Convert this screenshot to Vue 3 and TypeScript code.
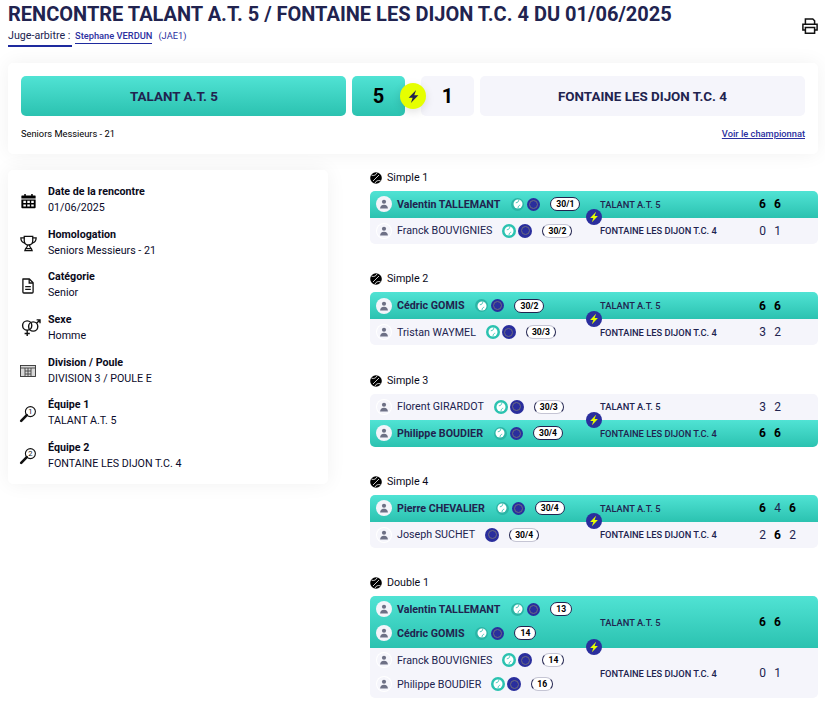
<script setup lang="ts">
interface Player { name: string; rank: string; noBall?: boolean }
interface Side { team: string; won: boolean; players: Player[]; scores: number[] }
interface Match { label: string; sides: Side[] }

const A = 'TALANT A.T. 5'
const B = 'FONTAINE LES DIJON T.C. 4'

const matches: Match[] = [
  { label: 'Simple 1', sides: [
    { team: A, won: true, players: [{ name: 'Valentin TALLEMANT', rank: '30/1' }], scores: [6, 6] },
    { team: B, won: false, players: [{ name: 'Franck BOUVIGNIES', rank: '30/2' }], scores: [0, 1] },
  ] },
  { label: 'Simple 2', sides: [
    { team: A, won: true, players: [{ name: 'Cédric GOMIS', rank: '30/2' }], scores: [6, 6] },
    { team: B, won: false, players: [{ name: 'Tristan WAYMEL', rank: '30/3' }], scores: [3, 2] },
  ] },
  { label: 'Simple 3', sides: [
    { team: A, won: false, players: [{ name: 'Florent GIRARDOT', rank: '30/3' }], scores: [3, 2] },
    { team: B, won: true, players: [{ name: 'Philippe BOUDIER', rank: '30/4' }], scores: [6, 6] },
  ] },
  { label: 'Simple 4', sides: [
    { team: A, won: true, players: [{ name: 'Pierre CHEVALIER', rank: '30/4' }], scores: [6, 4, 6] },
    { team: B, won: false, players: [{ name: 'Joseph SUCHET', rank: '30/4', noBall: true }], scores: [2, 6, 2] },
  ] },
  { label: 'Double 1', sides: [
    { team: A, won: true, players: [{ name: 'Valentin TALLEMANT', rank: '13' }, { name: 'Cédric GOMIS', rank: '14' }], scores: [6, 6] },
    { team: B, won: false, players: [{ name: 'Franck BOUVIGNIES', rank: '14' }, { name: 'Philippe BOUDIER', rank: '16' }], scores: [0, 1] },
  ] },
]

const infos = [
  { icon: 'cal', title: 'Date de la rencontre', value: '01/06/2025' },
  { icon: 'trophy', title: 'Homologation', value: 'Seniors Messieurs - 21' },
  { icon: 'file', title: 'Catégorie', value: 'Senior' },
  { icon: 'sex', title: 'Sexe', value: 'Homme' },
  { icon: 'grid', title: 'Division / Poule', value: 'DIVISION 3 / POULE E' },
  { icon: 'r1', title: 'Équipe 1', value: 'TALANT A.T. 5' },
  { icon: 'r2', title: 'Équipe 2', value: 'FONTAINE LES DIJON T.C. 4' },
]

function isBold(m: Match, s: Side, i: number): boolean {
  const other = m.sides.find((o) => o !== s)
  return !!other && s.scores[i] > other.scores[i]
}
</script>

<template>
  <div class="page">
    <svg class="defs" width="0" height="0" aria-hidden="true">
      <symbol id="bolt" viewBox="0 0 16 16">
        <path d="M10.800 1 2.800 9.200h4.300L5.200 15l8-8.400H8.800z" fill="currentColor" />
      </symbol>
      <symbol id="person" viewBox="0 0 16 16">
        <circle cx="8" cy="5" r="2.800" fill="currentColor" />
        <path d="M2.800 14c0-3.200 2-5 5.200-5s5.200 1.800 5.200 5z" fill="currentColor" />
      </symbol>
      <symbol id="ball" viewBox="0 0 14 14">
        <circle cx="7" cy="7" r="4.500" fill="#fff" />
        <path d="M7.800 2.600C7.800 4.600 6.800 5.600 4.800 5.800M9.200 8.200C7.800 8.400 7 9.400 7 11.400" fill="none" stroke="currentColor" stroke-width=".8" />
      </symbol>
    </svg>

    <header class="head">
      <div>
        <h1 class="title">RENCONTRE TALANT A.T. 5 / FONTAINE LES DIJON T.C. 4 DU 01/06/2025</h1>
        <div class="ref">
          <span class="ref-label">Juge-arbitre :</span>
          <span class="ref-name">Stephane VERDUN</span>
          <span class="ref-grade">(JAE1)</span>
        </div>
      </div>
      <svg class="print" viewBox="0 0 16 16" width="16" height="16" fill="none" stroke="#111" stroke-width="1.500">
        <path d="M3.400 6V1h7.400L12.600 2.800V6" />
        <path d="M3.400 12H.9V6.200h14.200V12h-2.500" />
        <path d="M3.400 9.400h9.200v5.800H3.400z" />
      </svg>
    </header>

    <section class="card score-card">
      <div class="score-row">
        <div class="team win first">TALANT A.T. 5</div>
        <div class="score win">5</div>
        <div class="flash">
          <svg width="15" height="15"><use href="#bolt" /></svg>
        </div>
        <div class="score lose">1</div>
        <div class="team lose">FONTAINE LES DIJON T.C. 4</div>
      </div>
      <div class="score-foot">
        <span>Seniors Messieurs - 21</span>
        <span class="champ">Voir le championnat</span>
      </div>
    </section>

    <div class="columns">
      <aside class="card infos">
        <div v-for="info in infos" :key="info.title" class="info">
          <span class="info-icon">
            <svg v-if="info.icon === 'cal'" viewBox="0 0 16 16" width="15" height="16">
              <path fill="#000" d="M3.500.5h1.600v1.600h5.800V.5h1.600v1.600H15a.6.6 0 0 1 .6.600v2.500H.4V2.700a.6.6 0 0 1 .6-.6h2.500zM.4 6.300h15.200v8.400a.9.9 0 0 1-.9.9H1.300a.9.9 0 0 1-.9-.9z" />
              <path fill="#fff" d="M2.500 7.800h2.700v2.300H2.500zM6.700 7.800h2.700v2.300H6.700zM10.900 7.800h2.700v2.300h-2.700zM2.500 11.600h2.700v2.300H2.500zM6.700 11.600h2.700v2.300H6.700zM10.900 11.600h2.700v2.300h-2.700z" />
            </svg>
            <svg v-else-if="info.icon === 'trophy'" viewBox="0 0 16 16" width="17" height="17" fill="none" stroke="#111" stroke-width="1.200">
              <path d="M4 1.200h8v4.300c0 2.400-1.700 3.900-4 3.900S4 7.900 4 5.500z" />
              <path d="M4 2.600H.8c0 3 1.300 4.600 3.900 5M12 2.600h3.200c0 3-1.300 4.600-3.900 5" />
              <path d="M7.100 9.500c0 1.500-.8 2.600-1.900 3.500L4.600 14.800h6.800L10.800 13c-1.100-.9-1.900-2-1.900-3.500M5 12.900h6" />
            </svg>
            <svg v-else-if="info.icon === 'file'" viewBox="0 0 16 16" width="16" height="16" fill="none" stroke="#111" stroke-width="1.300">
              <path d="M2.900 1h6.500l3.700 3.700V14a1 1 0 0 1-1 1H3.900a1 1 0 0 1-1-1z" stroke-linejoin="round" />
              <path d="M9.200 1v4h3.800M5.200 8.600h5.600M5.200 11.300h5.600" />
            </svg>
            <svg v-else-if="info.icon === 'sex'" class="wide" viewBox="0 0 20 18" width="20" height="18" fill="none" stroke="#111" stroke-width="1.400">
              <circle cx="6.200" cy="6.500" r="4.600" />
              <circle cx="12.200" cy="7.500" r="4.600" />
              <path d="M15.500 4.200 19 .9M15.600.9H19v3.400M6.200 11v6M3.600 14.500h5.200" />
            </svg>
            <svg v-else-if="info.icon === 'grid'" viewBox="0 0 16 12" width="16" height="12" fill="none" stroke="#333" stroke-width=".9">
              <rect x=".5" y=".5" width="15" height="11" fill="#d8d8d8" />
              <path d="M.5 3h15M5 3v8.500M8 3v8.500M11 3v8.500M5 6h6M5 9h6" stroke="#444" />
            </svg>
            <svg v-else viewBox="0 0 18 18" width="18" height="18" fill="none" stroke="#111">
              <circle cx="11.400" cy="6.600" r="5" stroke-width="1.100" />
              <path d="M7.800 10.200 2.200 15.800" stroke-width="2.600" stroke-linecap="round" />
              <text x="11.400" y="9.200" font-size="7.500" text-anchor="middle" fill="#111" stroke="none" font-family="Roboto, sans-serif">{{ info.icon === 'r1' ? '1' : '2' }}</text>
            </svg>
          </span>
          <div class="info-body">
            <div class="info-title">{{ info.title }}</div>
            <div class="info-value">{{ info.value }}</div>
          </div>
        </div>
      </aside>

      <main class="matches">
        <article v-for="m in matches" :key="m.label" class="match">
          <div class="match-label">
            <svg viewBox="0 0 12 12" width="12" height="12">
              <circle cx="6" cy="6" r="5.800" fill="#000" />
              <path d="M1.500 3.200C4 4 6.400 3 7 .8M10.500 8.800C8 8 5.600 9 5 11.200M3 9l6-6" fill="none" stroke="#fff" stroke-width=".8" />
            </svg>
            {{ m.label }}
          </div>
          <div class="board">
            <div v-for="s in m.sides" :key="s.team" class="side" :class="[s.won ? 'won' : 'lost', s.players.length > 1 ? 'pair' : '']">
              <div class="players">
                <div v-for="p in s.players" :key="p.name" class="player">
                  <span class="avatar"><svg width="12" height="12"><use href="#person" /></svg></span>
                  <span class="name">{{ p.name }}</span>
                  <span v-if="!p.noBall" class="chip ball"><svg width="14" height="14"><use href="#ball" /></svg></span>
                  <span class="chip ring" :class="{ solo: p.noBall }"><i></i></span>
                  <span class="rank">{{ p.rank }}</span>
                </div>
              </div>
              <div class="side-team">{{ s.team }}</div>
              <div class="side-scores">
                <span v-for="(v, i) in s.scores" :key="i" class="set" :class="{ strong: isBold(m, s, i) }">{{ v }}</span>
              </div>
            </div>
            <span class="board-bolt"><svg width="12" height="12"><use href="#bolt" /></svg></span>
          </div>
        </article>
      </main>
    </div>
  </div>
</template>

<style scoped>
.page {
  width: 825px;
  height: 703px;
  overflow: hidden;
  background: #fff;
  font-family: Roboto, "Liberation Sans", sans-serif;
  color: #000;
  box-sizing: border-box;
  padding: 4px 7px 0 8px;
}
.defs { position: absolute; }
.head { display: flex; justify-content: space-between; align-items: flex-start; height: 59px; }
.title { margin: 0; font-size: 20px; line-height: 21px; font-weight: 700; color: #21234f; }
.ref { display: flex; align-items: flex-start; margin-top: 3px; height: 20px; font-size: 9.300px; color: #2b2fa0; }
.ref-label { font-size: 10.700px; line-height: 16px; height: 17px; width: 64px; color: #21234f; border-bottom: 2px solid #1e2a9e; white-space: nowrap; }
.ref-name { margin-left: 3px; font-weight: 500; line-height: 14px; margin-top: 1px; height: 14px; border-bottom: 1px solid #1e2a9e; }
.ref-grade { margin-left: 6px; line-height: 14px; margin-top: 1px; }
.print { margin-top: 14px; flex: none; }
.card { background: #fff; border-radius: 5px; box-shadow: 0 0 20px rgba(0, 0, 0, .06); }
.score-card { height: 91px; box-sizing: border-box; padding: 13px 13px 0; }
.score-row { position: relative; display: flex; height: 40px; }
.team, .score { border-radius: 5px; display: flex; align-items: center; justify-content: center; height: 40px; font-weight: 700; box-sizing: border-box; }
.team { width: 325px; font-size: 13.400px; color: #21234f; }
.team.first { padding-right: 19px; }
.score { width: 53px; font-size: 20px; }
.score.win { margin-left: 6px; }
.score.lose { margin-left: 16px; margin-right: 6px; }
.win { background: linear-gradient(180deg, #50e3d4, #2bc2b0); }
.lose { background: #f5f5fb; }
.flash { position: absolute; left: 379px; top: 7px; width: 26px; height: 26px; border-radius: 50%; background: #e6ff00; color: #21234f; display: flex; align-items: center; justify-content: center; box-shadow: 0 3px 10px rgba(0, 0, 0, .12); }
.score-foot { display: flex; justify-content: space-between; margin-top: 11px; font-size: 9.300px; line-height: 14px; }
.champ { color: #2b2fa0; font-weight: 500; text-decoration: underline; }
.columns { display: flex; margin-top: 16px; align-items: flex-start; }
.infos { width: 320px; height: 314px; box-sizing: border-box; padding: 14px 13px 0; flex: none; }
.info { display: flex; align-items: center; height: 32px; margin-bottom: 10.630px; }
.info-icon { width: 14px; margin-right: 13px; display: flex; justify-content: center; flex: none; margin-top: 1px; }
.info-icon svg { flex: none; }
.info-icon svg.wide { margin-left: 6px; }
.info-title { font-size: 10.700px; line-height: 16px; font-weight: 700; color: #0a0a1a; }
.info-value { font-size: 10.700px; line-height: 16px; color: #0a0a2a; }
.matches { margin-left: 42px; flex: 1; }
.match { height: 101.330px; box-sizing: border-box; padding-top: 1px; }
.match-label { display: flex; align-items: center; gap: 5px; height: 14px; font-size: 10.700px; line-height: 14px; margin-bottom: 6px; color: #0a0a1a; }
.board { position: relative; border-radius: 5px; }
.side { display: flex; align-items: center; }
.side:first-child { border-radius: 5px 5px 0 0; }
.side:nth-child(2) { border-radius: 0 0 5px 5px; }
.won { background: linear-gradient(180deg, #50e3d4, #2bc2b0); }
.lost { background: #f5f5fb; }
.players { width: 230px; flex: none; }
.player { display: flex; align-items: center; padding-left: 6px; font-size: 10.700px; color: #21234f; }
.won .player { height: 26.700px; }
.lost .player { height: 26.300px; }
.won.pair .players { padding: 1px 0 3px; }
.lost.pair .players { padding: 0 0 2px; }
.pair .player { height: 24px; }
.avatar { width: 16px; height: 16px; border-radius: 50%; display: flex; align-items: center; justify-content: center; color: #6d7085; flex: none; }
.won .avatar { background: #f4f4fa; }
.lost .avatar { box-shadow: inset 0 0 0 1px #fff; }
.name { margin-left: 5px; white-space: nowrap; }
.won .name { font-weight: 700; }
.chip { width: 13px; height: 13px; border-radius: 50%; display: flex; align-items: center; justify-content: center; flex: none; }
.chip svg { flex: none; }
.lost .chip { width: 14px; height: 14px; }
.ball { margin-left: 11px; color: #2bc2b0; background: #2bc2b0; }
.won .ball { background: #2bb5a6; color: #2bb5a6; }
.lost .ball { margin-left: 10px; }
.ring { margin-left: 3px; background: #2a2e9d; }
.lost .ring { margin-left: 2px; }
.lost .ring.solo { margin-left: 10px; }
.ring i { width: 9px; height: 9px; border-radius: 50%; border: 1px solid #6c6c7e; box-sizing: border-box; }
.rank { margin-left: 10px; background: #fff; border: 1px solid #21234f; border-top-color: #c5c5d4; border-bottom-color: #c5c5d4; border-radius: 8px; font-size: 8.600px; font-weight: 700; line-height: 12px; text-align: center; padding: 0 5px; height: 12px; color: #000; }
.won .rank { border-color: #21234f; }
.side-team { width: 155px; font-size: 9.300px; font-weight: 500; color: #21234f; white-space: nowrap; flex: none; }
.side-scores { display: flex; }
.set { width: 15px; text-align: center; font-size: 12px; color: #21234f; }
.set.strong { font-weight: 700; color: #000; }
.board-bolt { position: absolute; left: 216px; top: 50%; margin-top: -8px; width: 16px; height: 16px; border-radius: 50%; background: #2a2e9d; color: #e6ff00; display: flex; align-items: center; justify-content: center; }
</style>

<style>
html, body { margin: 0; background: #fff; }
</style>
